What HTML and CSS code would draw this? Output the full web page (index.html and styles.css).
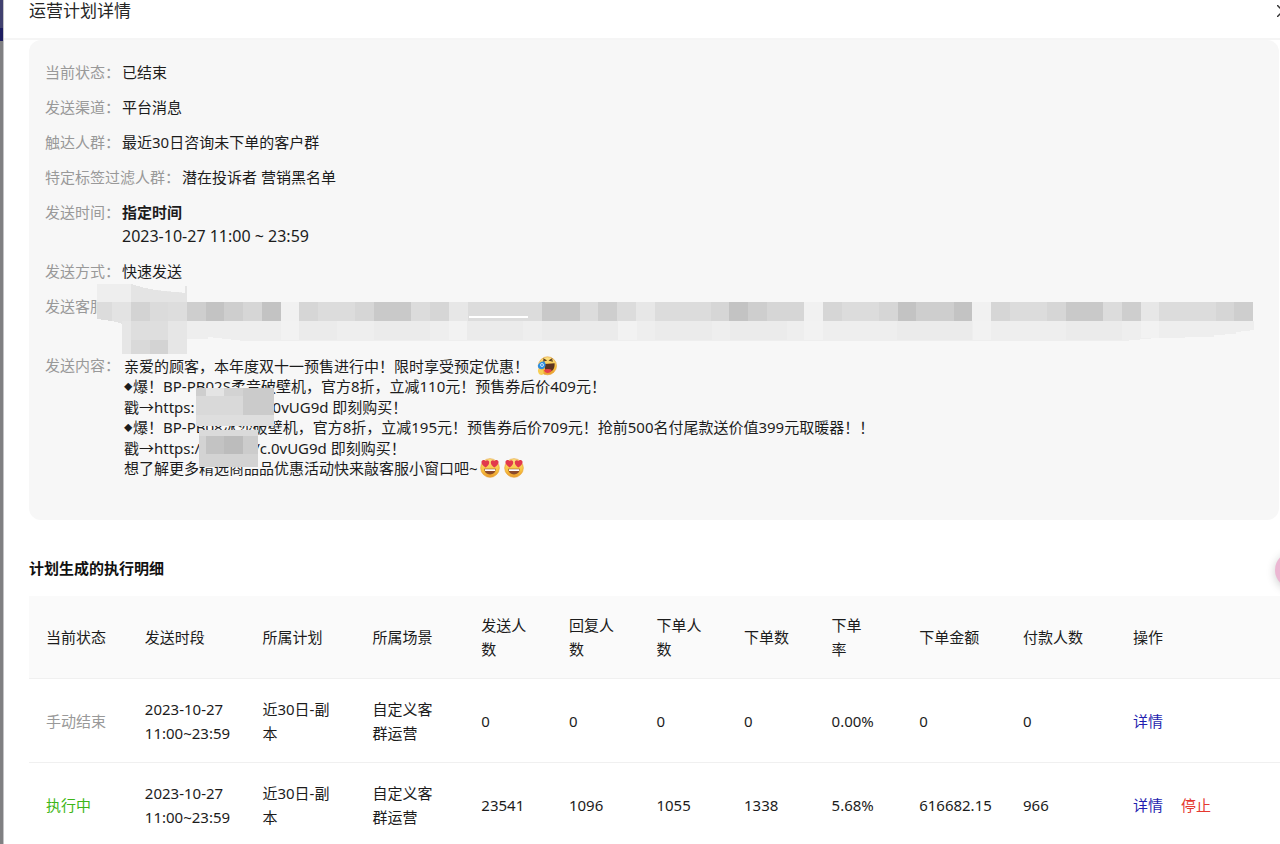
FILE: index.html
```html
<!DOCTYPE html>
<html lang="zh-CN">
<head>
<meta charset="utf-8">
<meta name="viewport" content="width=device-width, initial-scale=1">
<title>运营计划详情</title>
<link rel="stylesheet" href="styles.css">
</head>
<body>
<svg class="defs" aria-hidden="true">
  <defs>
    <linearGradient id="face" x1="0" y1="0" x2="0" y2="1">
      <stop offset="0" stop-color="#fbe38a"/><stop offset=".6" stop-color="#f9c440"/><stop offset="1" stop-color="#e99a2c"/>
    </linearGradient>
    <symbol id="heart-eyes" viewBox="0 0 20 20">
      <circle cx="10" cy="10" r="9.3" fill="url(#face)" stroke="#e8a33a" stroke-width=".7"/>
      <path d="M5.6 9.4C2.6 7.6 1 5.7 1.5 3.6c.5-1.9 3-2.3 4-.6C6.900 1.600 9.200 2.400 9.200 4.400c0 2.100-1.600 3.800-3.600 5z" fill="#e2394c"/>
      <path d="M14.400 9.400c3-1.800 4.600-3.700 4.100-5.800-.5-1.900-3-2.300-4-.6-1.400-1.400-3.700-.6-3.700 1.400 0 2.100 1.600 3.800 3.600 5z" fill="#e2394c"/>
      <path d="M4.200 10.800h11.600c-.2 3.600-2.700 5.700-5.800 5.700s-5.600-2.100-5.800-5.700z" fill="#8c4a2a"/>
      <path d="M4.800 11.200h10.400v1.900H5.100z" fill="#fff"/>
    </symbol>
    <symbol id="laugh-tear" viewBox="0 0 20 20">
      <circle cx="10.500" cy="9.800" r="9" fill="url(#face)" stroke="#e8a33a" stroke-width=".7"/>
      <path d="M6.200 2.700l2.600 1.600-2.800.8M15.400 2.700l-2.600 1.600 3 .8" fill="none" stroke="#5a3a1c" stroke-width="1.100"/>
      <path d="M8 8l9.600-.8c.4 4.600-1.600 8.300-5.400 8.600-3.400.3-5.200-2.800-4.200-7.800z" fill="#5c3420"/>
      <path d="M7 14.300c2-1.600 5.600-1.600 7.800-.2-.7 2-2.200 3-4.200 3-1.800 0-3.100-1-3.600-2.800z" fill="#e5404a"/>
      <path d="M1 13.500c1.300-1.400 4-.8 5.200 1.400 1 2 .2 4-1.700 4.100C2 19.100.6 16 1 13.500z" fill="#f7cf55"/>
      <path d="M.8 9.600C1.800 6.800 4.400 5 7.400 5.600c1.900 2 1.500 5-.4 7-2.500 1.700-6.500.4-6.200-3z" fill="#2f8fe0"/>
      <circle cx="5" cy="9" r="1.500" fill="none" stroke="#d5ecff" stroke-width=".9"/>
    </symbol>
  </defs>
</svg>

<div class="screen">
  <div class="backdrop"></div>
  <main class="drawer">
    <header class="drawer-header">
      <h1 class="drawer-title">运营计划详情</h1>
      <button class="close" type="button" aria-label="关闭">
        <svg viewBox="0 0 12 12" width="12" height="12"><path d="M0 0l12 12M12 0L0 12" stroke="#333" stroke-width="1.500"/></svg>
      </button>
    </header>

    <section class="summary">
      <dl class="fields">
        <div class="field"><dt>当前状态：</dt><dd>已结束</dd></div>
        <div class="field"><dt>发送渠道：</dt><dd>平台消息</dd></div>
        <div class="field"><dt>触达人群：</dt><dd>最近30日咨询未下单的客户群</dd></div>
        <div class="field"><dt>特定标签过滤人群：</dt><dd>潜在投诉者 营销黑名单</dd></div>
        <div class="field"><dt>发送时间：</dt><dd><strong>指定时间</strong><div class="when">2023-10-27 11:00 ~ 23:59</div></dd></div>
        <div class="field"><dt>发送方式：</dt><dd>快速发送</dd></div>
        <div class="field agents"><dt>发送客服：</dt><dd></dd>
          <svg class="mask-agents" viewBox="0 0 1157 72" width="1157" height="72" aria-hidden="true" shape-rendering="crispEdges">
            <path d="M0 1h34l14 5 42 4v28H34z" fill="#e9e9e9"/>
            <path d="M0 1h34v18H0z" fill="#eeeeee"/>
            <path d="M34 1l14 4 16 3 24 2V3h2v16H34z" fill="#e4e4e4"/>
            <path d="M0 19h15v19L0 36z" fill="#dcdcdc"/><path d="M15 19h19v24l-19-5z" fill="#e3e3e3"/>
            <path d="M34 19h19v19H34z" fill="#d3d3d3"/><path d="M53 19h18v19H53z" fill="#dbdbdb"/><path d="M71 19h19v19H71z" fill="#dddddd"/>
            <path d="M25 38h65v33H25z" fill="#e6e6e6"/><path d="M34 38h37v19H34z" fill="#dedede"/><path d="M34 57h19v14H34z" fill="#d9d9d9"/><path d="M53 57h18v14H53z" fill="#d3d3d3"/>
            <path d="M90 38h1067v9l-18 2v2l-22 1v2l-58 1-33 3H147l-36-4v2H90z" fill="#eeeeee"/>
            <path d="M202 38h38v19h-38zM277 38h56v19h-56zM370 38h56v19h-56zM445 38h76v19h-76zM558 38h57v19h-57zM633 38h57v19h-57zM800 38h75v19h-75zM969 38h56v19h-56z" fill="#ebebeb"/>
            <path d="M184 38h18v19h-18zM352 38h18v19h-18zM521 38h19v19h-19zM707 38h19v19h-19zM876 38h18v19h-18zM1044 38h18v17h-18z" fill="#f2f2f2"/>
            <g transform="translate(90 19) scale(18.700 19)">
              <path d="M0 0h57v1H0z" fill="#dcdcdc"/>
              <path d="M5 0h1v1H5zM33 0h1v1h-1zM42 0h1v1h-1z" fill="#f1f1f1"/>
              <path d="M14 0h1v1h-1zM24 0h1v1h-1zM51 0h1v1h-1z" fill="#e7e7e7"/>
              <path d="M0 0h1v1H0zM2 0h1v1H2zM11 0h1v1h-1zM22 0h1v1h-1zM30 0h1v1h-1zM39 0h2v1h-2zM50 0h1v1h-1zM56 0h1v1h-1z" fill="#cecece"/>
              <path d="M10 0h2v1h-2zM19 0h2v1h-2zM47 0h2v1h-2z" fill="#c9c9c9"/>
              <path d="M1 0h1v1H1zM4 0h1v1H4zM29 0h1v1h-1zM38 0h1v1h-1zM41 0h1v1h-1z" fill="#c3c3c3"/>
              <path d="M3 0h1v1H3zM6 0h1v1H6zM9 0h1v1H9zM13 0h1v1h-1zM28 0h1v1h-1zM31 0h2v1h-2zM34 0h1v1h-1zM37 0h1v1h-1zM43 0h1v1h-1zM46 0h1v1h-1zM55 0h1v1h-1z" fill="#d6d6d6"/>
            </g>
            <path d="M372 33h59v2h-59z" fill="#fff"/>
          </svg>
        </div>
        <div class="field"><dt>发送内容：</dt>
          <dd class="message">
            <p>亲爱的顾客，本年度双十一预售进行中！限时享受预定优惠！<svg class="emoji emoji-first" role="img" aria-label="笑哭"><use href="#laugh-tear"/></svg><br><span class="bullet">⬥</span>爆！BP-PB02S柔音破壁机，官方8折，立减110元！预售券后价409元！</p>
            <p>戳→https:<span class="gap-long"></span>0vUG9d 即刻购买！<br><span class="bullet">⬥</span>爆！BP-PB08冰沙破壁机，官方8折，立减195元！预售券后价709元！抢前500名付尾款送价值399元取暖器！！</p>
            <p>戳→https:/<span class="gap-short"></span>/c.0vUG9d 即刻购买！<br>想了解更多精选商品品优惠活动快来敲客服小窗口吧~<svg class="emoji" role="img" aria-label="花痴"><use href="#heart-eyes"/></svg><svg class="emoji" role="img" aria-label="花痴"><use href="#heart-eyes"/></svg></p>
            <svg class="mask-links" viewBox="0 0 78 79" width="78" height="79" aria-hidden="true" shape-rendering="crispEdges">
              <path d="M0 0h78v38H0z" fill="#d9d9d9"/><path d="M0 0h10v8H0z" fill="#cecece"/><path d="M10 0h18v8H10z" fill="#e4e4e4"/><path d="M47 0h31v27H47z" fill="#cbcbcb"/><path d="M28 0h19v8H28z" fill="#d3d3d3"/><path d="M0 27h78v11H0z" fill="#dedede"/>
              <path d="M3 42h59v37H3z" fill="#d3d3d3"/><path d="M3 42h59v6H3z" fill="#dadada"/><path d="M10 48h18v18H10z" fill="#c3c3c3"/><path d="M28 48h19v18H28z" fill="#bcbcbc"/><path d="M47 48h15v18H47z" fill="#cccccc"/>
            </svg>
          </dd>
        </div>
      </dl>
    </section>

    <section class="details">
      <h2 class="details-title">计划生成的执行明细</h2>
      <table class="grid">
        <colgroup>
          <col class="c-status"><col class="c-period"><col class="c-plan"><col class="c-scene"><col class="c-num"><col class="c-num"><col class="c-num"><col class="c-num"><col class="c-num"><col class="c-amount"><col class="c-paid"><col>
        </colgroup>
        <thead>
          <tr><th scope="col">当前状态</th><th scope="col">发送时段</th><th scope="col">所属计划</th><th scope="col">所属场景</th><th scope="col">发送人<br>数</th><th scope="col">回复人<br>数</th><th scope="col">下单人<br>数</th><th scope="col">下单数</th><th scope="col">下单<br>率</th><th scope="col">下单金额</th><th scope="col">付款人数</th><th scope="col">操作</th></tr>
        </thead>
        <tbody>
          <tr><td class="ended">手动结束</td><td>2023-10-27<br>11:00~23:59</td><td>近30日-副<br>本</td><td>自定义客<br>群运营</td><td>0</td><td>0</td><td>0</td><td>0</td><td>0.00%</td><td>0</td><td>0</td><td><div class="actions"><a class="link" href="#">详情</a></div></td></tr>
          <tr><td class="running">执行中</td><td>2023-10-27<br>11:00~23:59</td><td>近30日-副<br>本</td><td>自定义客<br>群运营</td><td>23541</td><td>1096</td><td>1055</td><td>1338</td><td>5.68%</td><td>616682.15</td><td>966</td><td><div class="actions"><a class="link" href="#">详情</a><a class="link danger" href="#">停止</a></div></td></tr>
        </tbody>
      </table>
    </section>
  </main>
  <button class="assistant" type="button" aria-label="助手"></button>
</div>
</body>
</html>
```
FILE: styles.css
```css
* { box-sizing: border-box; }

body {
  margin: 0;
  background: #fff;
  color: #1c1c1c;
  font: 15px/24px "Noto Sans", "Noto Sans CJK SC", sans-serif;
}

h1, h2, dl, dd, p { margin: 0; }

.defs { position: absolute; width: 0; height: 0; }

.screen {
  position: relative;
  display: flex;
  height: 100vh;
  overflow: hidden;
}

.backdrop {
  flex: none;
  width: 4px;
  border-right: 1px solid #c4c4c6;
  background: linear-gradient(#40406f 0, #40406f 28px, #1d1d60 28px, #1d1d60 41px, #808082 41px);
}

.drawer { flex: 1; min-width: 0; }

.drawer-header {
  position: relative;
  height: 40px;
  padding-left: 25px;
  border-bottom: 2px solid #f5f5f5;
}

.drawer-title {
  font-size: 17px;
  font-weight: 400;
  line-height: 22px;
  color: #262626;
}

.close {
  position: absolute;
  top: 5px;
  right: -9px;
  display: flex;
  padding: 0;
  border: 0;
  background: none;
}

.summary {
  margin: 0 1px 0 25px;
  padding: 20px 16px 42px;
  border-radius: 12px;
  background: #f7f7f7;
}

.fields {
  display: flex;
  flex-direction: column;
  gap: 11px;
}

.field { display: flex; }
.field dt { flex: none; margin-right: 2px; color: #999; }
.field dd { color: #1c1c1c; }

.when { font-size: 16px; }

.agents { position: relative; min-height: 48px; }

.mask-agents { position: absolute; top: -11px; left: 52px; }

.message {
  position: relative;
  display: flex;
  flex-direction: column;
  gap: 1px;
  padding: 3px 0 0 2px;
  line-height: 20px;
}

.emoji {
  width: 20px;
  height: 20px;
  margin: 0 2px;
  vertical-align: top;
}

.emoji-first { margin-left: 8px; }

.bullet {
  display: inline-block;
  width: 9px;
  font-family: "DejaVu Sans", sans-serif;
  font-size: 12px;
  vertical-align: top;
}

.gap-long, .gap-short { display: inline-block; }
.gap-long { width: 78px; }
.gap-short { width: 54px; }

.mask-links { position: absolute; top: 35px; left: 74px; }

.details { padding: 36px 0 0 25px; }

.details-title {
  margin-bottom: 16px;
  font-size: 15px;
  font-weight: 700;
  line-height: 24px;
  color: #111;
}

.grid {
  width: 100%;
  table-layout: fixed;
  border-collapse: separate;
  border-spacing: 0;
  white-space: nowrap;
}

.grid th, .grid td {
  padding: 17px;
  border-bottom: 1px solid #f0f0f0;
  font-weight: 400;
  text-align: left;
  vertical-align: middle;
}

.grid td { height: 84px; }

.grid th { background: #fafafa; }

.c-status { width: 7.9%; }
.c-period { width: 9.4%; }
.c-plan, .c-paid { width: 8.8%; }
.c-scene { width: 8.7%; }
.c-num { width: 7%; }
.c-amount { width: 8.3%; }

.grid .ended { color: #999; }
.grid .running { color: #3fb618; }

.actions { display: flex; gap: 18px; }
.link { color: #1f1fb0; text-decoration: none; }
.danger { color: #e5392f; }

.assistant {
  position: absolute;
  top: 552px;
  right: -31px;
  width: 36px;
  height: 36px;
  padding: 0;
  border: 0;
  border-radius: 50%;
  background: #ecb6d2;
  box-shadow: 0 2px 10px rgba(0, 0, 0, .2);
}
```
